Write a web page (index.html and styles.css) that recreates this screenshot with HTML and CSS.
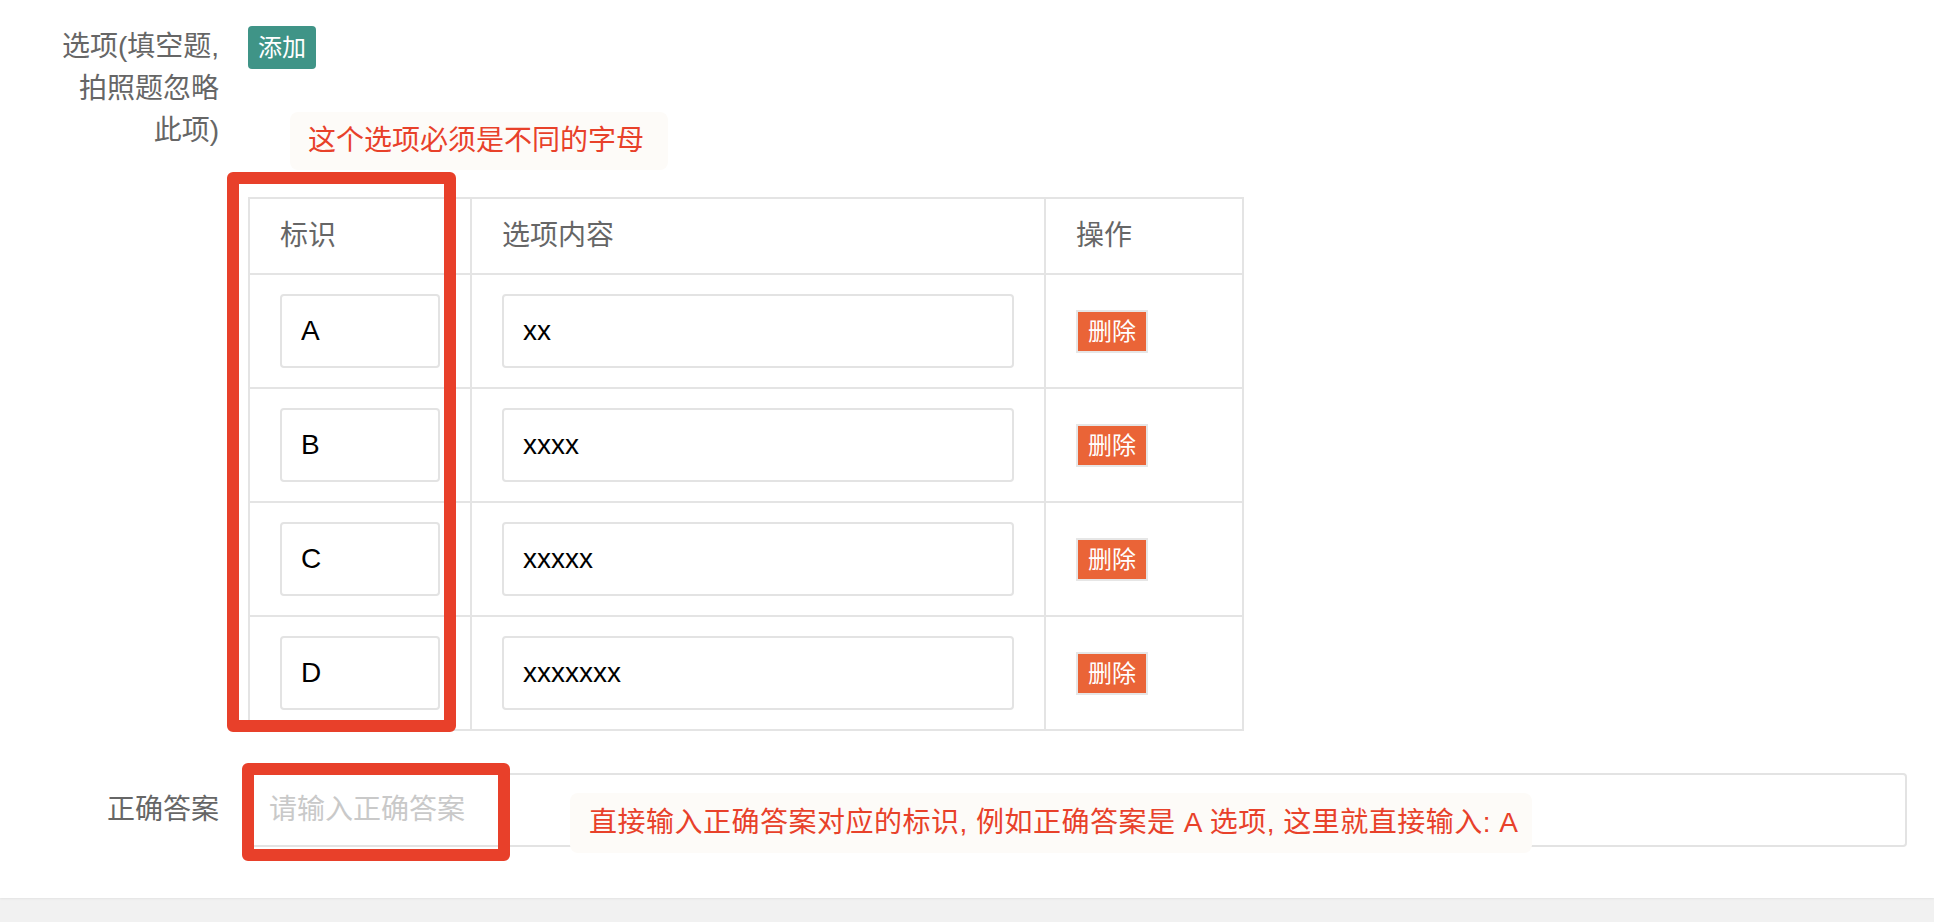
FILE: index.html
```html
<!DOCTYPE html>
<html lang="zh-CN">
<head>
  <meta charset="UTF-8">
  <title>选项设置</title>
  <link rel="stylesheet" href="styles.css">
</head>
<body>
  <div class="card">
    <div class="form-row">
      <label class="form-label">选项(填空题,<br>拍照题忽略<br>此项)</label>
      <div class="form-field">
        <button class="btn-add">添加</button>
        <div class="note">这个选项必须是不同的字母</div>

        <div class="table-wrap">
          <table class="options">
            <colgroup>
              <col class="col-key">
              <col class="col-text">
              <col class="col-op">
            </colgroup>
            <thead>
              <tr>
                <th>标识</th>
                <th>选项内容</th>
                <th>操作</th>
              </tr>
            </thead>
            <tbody>
              <tr>
                <td><input class="cell-input" type="text" value="A"></td>
                <td><input class="cell-input" type="text" value="xx"></td>
                <td><button class="btn-del">删除</button></td>
              </tr>
              <tr>
                <td><input class="cell-input" type="text" value="B"></td>
                <td><input class="cell-input" type="text" value="xxxx"></td>
                <td><button class="btn-del">删除</button></td>
              </tr>
              <tr>
                <td><input class="cell-input" type="text" value="C"></td>
                <td><input class="cell-input" type="text" value="xxxxx"></td>
                <td><button class="btn-del">删除</button></td>
              </tr>
              <tr>
                <td><input class="cell-input" type="text" value="D"></td>
                <td><input class="cell-input" type="text" value="xxxxxxx"></td>
                <td><button class="btn-del">删除</button></td>
              </tr>
            </tbody>
          </table>
          <!-- red highlight round the key column -->
          <div class="mark mark-key"></div>
        </div>
      </div>
    </div>

    <div class="form-row answer-row">
      <label class="form-label">正确答案</label>
      <div class="form-field answer-field">
        <input class="answer-input" type="text" placeholder="请输入正确答案">
        <div class="mark mark-answer"></div>
        <div class="note note-answer">直接输入正确答案对应的标识, 例如正确答案是 A 选项, 这里就直接输入: A</div>
      </div>
    </div>
  </div>
</body>
</html>
```

FILE: styles.css
```css
html, body {
  margin: 0;
  padding: 0;
}

body {
  font-family: "Liberation Sans", "Noto Sans CJK SC", sans-serif;
  font-size: 28px;
  line-height: 42px;
  color: #666;
  background: #f1f1f1;
  height: 922px;
}

.card {
  background: #fff;
  padding: 26px 27px 51px 0;
  box-shadow: 0 1px 2px rgba(0,0,0,0.06);
}

.form-row {
  display: flex;
  align-items: flex-start;
}

.form-label {
  width: 219px;
  flex-shrink: 0;
  text-align: right;
  color: #666;
}

.form-field {
  flex: 1;
  margin-left: 29px;
  display: flex;
  flex-direction: column;
  align-items: flex-start;
}

.btn-add {
  height: 43px;
  padding: 0 10px;
  border: none;
  border-radius: 4px;
  background: #3f9487;
  color: #fff;
  font-family: "Liberation Sans", "Noto Sans CJK SC", sans-serif;
  font-size: 24px;
  line-height: 43px;
}

.note {
  margin: 43px 0 27px 42px;
  height: 58px;
  padding: 0 24px 0 18px;
  line-height: 58px;
  border-radius: 8px;
  background: #fdfbf8;
  color: #e8412a;
  white-space: nowrap;
}

.table-wrap {
  position: relative;
}

.options {
  width: 994px;
  table-layout: fixed;
  border-collapse: collapse;
}

.col-key { width: 222px; }
.col-text { width: 574px; }
.col-op { width: 198px; }

.options th,
.options td {
  border: 2px solid #e4e4e4;
  text-align: left;
  vertical-align: middle;
}

.options th {
  padding: 16px 30px;
  font-weight: normal;
  color: #666;
}

.options td {
  padding: 19px 30px;
}

.cell-input,
.answer-input {
  box-sizing: border-box;
  width: 100%;
  height: 74px;
  padding: 0 19px;
  border: 2px solid #e3e3e3;
  border-radius: 4px;
  background: #fff;
  color: #000;
  font-family: "Liberation Sans", "Noto Sans CJK SC", sans-serif;
  font-size: 28px;
  outline: none;
}

.answer-input::placeholder {
  color: #c9c9c9;
}

.btn-del {
  display: block;
  height: 43px;
  padding: 0 10px;
  border: 2px solid #e6e6e6;
  background: #ea6437;
  color: #fff;
  font-family: "Liberation Sans", "Noto Sans CJK SC", sans-serif;
  font-size: 24px;
  line-height: 39px;
}

.answer-row {
  margin-top: 42px;
  align-items: center;
}

.answer-field {
  position: relative;
}

.mark {
  position: absolute;
  box-sizing: border-box;
  border: 12px solid #e8402a;
  border-radius: 6px;
}

.mark-key {
  left: -21px;
  top: -25px;
  width: 229px;
  height: 560px;
}

.mark-answer {
  left: -6px;
  top: -10px;
  width: 268px;
  height: 98px;
}

.note-answer {
  position: absolute;
  left: 322px;
  top: 20px;
  margin: 0;
  height: 60px;
  line-height: 60px;
  padding: 0 13px 0 19px;
  letter-spacing: 0.5px;
}
```
